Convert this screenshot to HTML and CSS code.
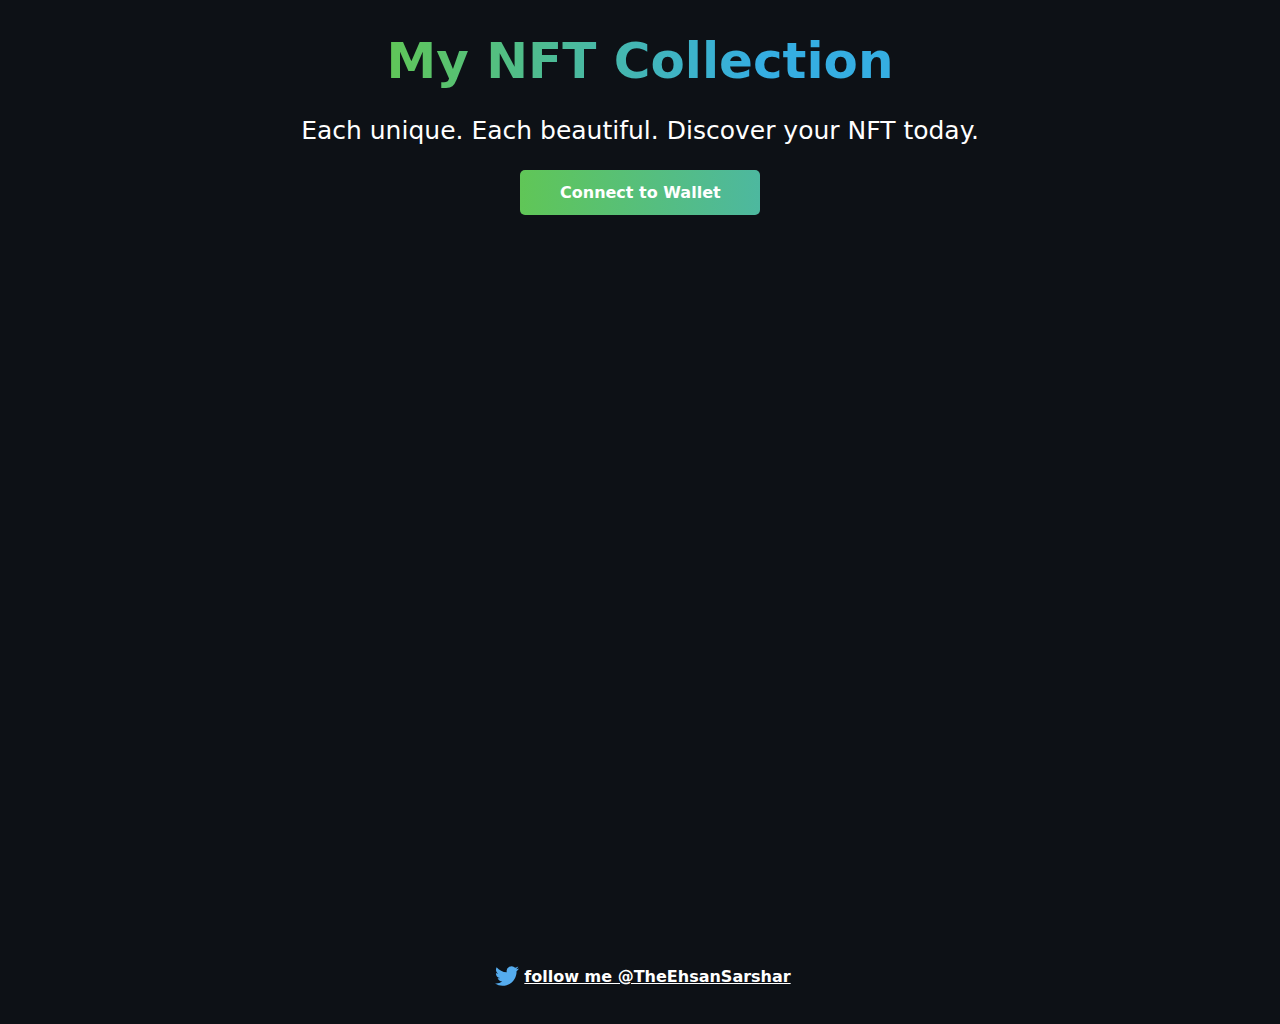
FILE: index.html
```html
<!DOCTYPE html>
<html lang="en">
<head>
<meta charset="utf-8">
<meta name="viewport" content="width=device-width, initial-scale=1">
<title>My NFT Collection</title>
<link rel="stylesheet" href="styles.css">
</head>
<body>
<div class="app">
  <main class="hero">
    <h1 class="title">My NFT Collection</h1>
    <p class="subtitle">Each unique. Each beautiful. Discover your NFT today.</p>
    <button type="button" class="connect-button">Connect to Wallet</button>
  </main>
  <footer class="footer">
    <svg class="twitter-logo" viewBox="-6 -5 35 35" aria-hidden="true"><path fill="#55acee" d="M23.953 4.57a10 10 0 01-2.825.775 4.958 4.958 0 002.163-2.723c-.951.555-2.005.959-3.127 1.184a4.92 4.92 0 00-8.384 4.482C7.69 8.095 4.067 6.13 1.64 3.162a4.822 4.822 0 00-.666 2.475c0 1.71.87 3.213 2.188 4.096a4.904 4.904 0 01-2.228-.616v.06a4.923 4.923 0 003.946 4.827 4.996 4.996 0 01-2.212.085 4.936 4.936 0 004.604 3.417 9.867 9.867 0 01-6.102 2.105c-.39 0-.779-.023-1.17-.067a13.995 13.995 0 007.557 2.209c9.053 0 13.998-7.496 13.998-13.985 0-.21 0-.42-.015-.63A9.935 9.935 0 0024 4.59z"/></svg>
    <a class="footer-text" href="https://twitter.com/TheEhsanSarshar">follow me @TheEhsanSarshar</a>
  </footer>
</div>
</body>
</html>
```
FILE: styles.css
```css
body {
  margin: 0;
  font-family: "DejaVu Sans", sans-serif;
  color: #fff;
  background: #0d1116;
}

.app {
  display: flex;
  flex-direction: column;
  justify-content: space-between;
  min-height: 100vh;
  text-align: center;
}

.hero {
  display: flex;
  flex-direction: column;
  align-items: center;
  padding-top: 31px;
}

.title {
  margin: 0;
  font-size: 50px;
  line-height: 60px;
  font-weight: bold;
  color: transparent;
  background: linear-gradient(to right, #60c657 0%, #35aee2 73%);
  background-clip: text;
  -webkit-background-clip: text;
}

.subtitle {
  margin: 25px 0 24px;
  font-size: 25px;
  line-height: 30px;
}

.connect-button {
  width: 240px;
  height: 45px;
  border: 0;
  border-radius: 5px;
  padding: 0 40px;
  font: bold 16px "DejaVu Sans", sans-serif;
  color: #fff;
  background: linear-gradient(to right, #60c657, #4db89f);
  white-space: nowrap;
  cursor: pointer;
}

.footer {
  display: flex;
  justify-content: center;
  align-items: center;
  padding-bottom: 30px;
}

.twitter-logo {
  width: 35px;
  height: 35px;
}

.footer-text {
  font-size: 16px;
  font-weight: bold;
  color: #fff;
}
```
